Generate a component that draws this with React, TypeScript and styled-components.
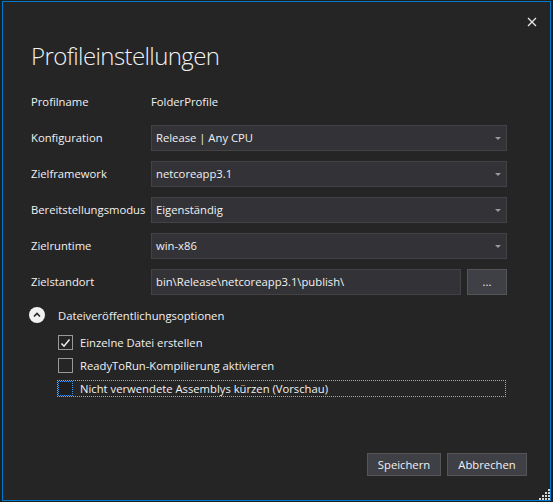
import React from "react";
import styled, { createGlobalStyle } from "styled-components";

const Global = createGlobalStyle`
  html, body { margin: 0; padding: 0; background: #1e1e1e; }
  body { font-family: "Open Sans", "Noto Sans", sans-serif; }
  * { box-sizing: border-box; }
`;

const Window = styled.div`
  position: relative;
  margin: 1px 0 0 2px;
  width: 549px;
  height: 500px;
  border: 1px solid #007acc;
  background: #252526;
  color: #f1f1f1;
  display: flex;
  flex-direction: column;
  padding: 0 23px 24px 28px;
  font-size: 11.25px;
`;

const CloseButton = styled.button`
  align-self: flex-end;
  margin: 15px -10px 0 0;
  width: 10px;
  height: 10px;
  padding: 0;
  border: none;
  background: transparent;
  display: flex;
  color: #e8e8e8;
`;

const Title = styled.h1`
  margin: 13px 0 0 0;
  font-size: 24px;
  line-height: 32px;
  letter-spacing: -0.6px;
  font-weight: 300;
  color: #f1f1f1;
`;

const Form = styled.div`
  margin-top: 17px;
  display: flex;
  flex-direction: column;
  gap: 10px;
`;

const FieldRow = styled.div`
  display: grid;
  grid-template-columns: 120px 356px;
  height: 26px;
  align-items: center;
`;

const Label = styled.span`
  line-height: 26px;
  white-space: nowrap;
  color: #f1f1f1;
`;

const Select = styled.div`
  position: relative;
  height: 26px;
  background: #333337;
  border: 1px solid #434346;
  padding: 0 0 0 4px;
  line-height: 24px;
  color: #f1f1f1;
`;

const Arrow = styled.span`
  position: absolute;
  right: 5px;
  top: 11px;
  width: 0;
  height: 0;
  border-left: 3px solid transparent;
  border-right: 3px solid transparent;
  border-top: 3px solid #999999;
`;

const PathGroup = styled.div`
  display: flex;
  gap: 6px;
`;

const TextInput = styled.div`
  flex: 1;
  height: 26px;
  background: #333337;
  border: 1px solid #434346;
  padding: 0 0 0 4px;
  line-height: 24px;
  white-space: nowrap;
`;

const Button = styled.button<{ $width: number; $height: number }>`
  width: ${(p) => p.$width}px;
  height: ${(p) => p.$height}px;
  background: #3f3f46;
  border: 1px solid #555555;
  color: #f1f1f1;
  font-family: inherit;
  font-size: 11.25px;
  padding: 0;
  line-height: 1;
`;

const Expander = styled.div`
  margin: 12px 0 0 -2px;
  display: flex;
  align-items: center;
  gap: 13px;
  height: 16px;
`;

const Circle = styled.span`
  width: 16px;
  height: 16px;
  border-radius: 50%;
  background: #f1f1f1;
  display: flex;
  align-items: center;
  justify-content: center;
`;

const Checks = styled.div`
  margin: 11px 0 0 26px;
  display: flex;
  flex-direction: column;
  gap: 6px;
`;

const CheckRow = styled.label<{ $focused?: boolean }>`
  width: 449px;
  height: 17px;
  display: flex;
  align-items: center;
  gap: 7px;
  border: 1px ${(p) => (p.$focused ? "dotted #a8a8a8" : "solid transparent")};
  white-space: nowrap;
`;

const Box = styled.span<{ $focused?: boolean }>`
  width: 15px;
  height: 15px;
  flex: none;
  border: 1px ${(p) => (p.$focused ? "dotted #3399ff" : "solid #999999")};
  background: ${(p) => (p.$focused ? "#1e1e1e" : "transparent")};
  display: flex;
  align-items: center;
  justify-content: center;
`;

const Footer = styled.div`
  margin-top: auto;
  display: flex;
  justify-content: flex-end;
  gap: 6px;
`;

const Grip = styled.svg`
  position: absolute;
  right: 0;
  bottom: 0;
`;

const selects: [string, string][] = [
  ["Konfiguration", "Release | Any CPU"],
  ["Zielframework", "netcoreapp3.1"],
  ["Bereitstellungsmodus", "Eigenständig"],
  ["Zielruntime", "win-x86"],
];

const checks = [
  { text: "Einzelne Datei erstellen", checked: true, focused: false },
  { text: "ReadyToRun-Kompilierung aktivieren", checked: false, focused: false },
  { text: "Nicht verwendete Assemblys kürzen (Vorschau)", checked: false, focused: true },
];

const gripDots: [number, number][] = [];
for (let r = 0; r < 4; r++) {
  for (let c = 0; c < 4; c++) {
    if (r + c >= 3) gripDots.push([c * 3, r * 3]);
  }
}

export default function App() {
  return (
    <>
      <Global />
      <Window>
        <CloseButton aria-label="Schließen">
          <svg width="10" height="10" viewBox="0 0 10 10">
            <path d="M1 1 L9 9 M9 1 L1 9" stroke="currentColor" strokeWidth="1.3" />
          </svg>
        </CloseButton>
        <Title>Profileinstellungen</Title>
        <Form>
          <FieldRow>
            <Label>Profilname</Label>
            <Label>FolderProfile</Label>
          </FieldRow>
          {selects.map(([label, value]) => (
            <FieldRow key={label}>
              <Label>{label}</Label>
              <Select>
                {value}
                <Arrow />
              </Select>
            </FieldRow>
          ))}
          <FieldRow>
            <Label>Zielstandort</Label>
            <PathGroup>
              <TextInput>bin\Release\netcoreapp3.1\publish\</TextInput>
              <Button $width={40} $height={26}>...</Button>
            </PathGroup>
          </FieldRow>
        </Form>
        <Expander>
          <Circle>
            <svg width="8" height="6" viewBox="0 0 8 6">
              <path d="M1 4.5 L4 1.5 L7 4.5" fill="none" stroke="#252526" strokeWidth="1.6" />
            </svg>
          </Circle>
          <span>Dateiveröffentlichungsoptionen</span>
        </Expander>
        <Checks>
          {checks.map((c) => (
            <CheckRow key={c.text} $focused={c.focused}>
              <Box $focused={c.focused}>
                {c.checked && (
                  <svg width="11" height="10" viewBox="0 0 11 10">
                    <path d="M1.5 5.5 L4 8.2 L9.5 1.5" fill="none" stroke="#f1f1f1" strokeWidth="1.5" />
                  </svg>
                )}
              </Box>
              <span>{c.text}</span>
            </CheckRow>
          ))}
        </Checks>
        <Footer>
          <Button $width={74} $height={23}>Speichern</Button>
          <Button $width={80} $height={23}>Abbrechen</Button>
        </Footer>
        <Grip width="12" height="12" viewBox="0 0 12 12">
          {gripDots.map(([x, y]) => (
            <rect key={`${x}-${y}`} x={x + 1} y={y + 1} width="2" height="2" fill="#d8d8d8" />
          ))}
        </Grip>
      </Window>
    </>
  );
}
